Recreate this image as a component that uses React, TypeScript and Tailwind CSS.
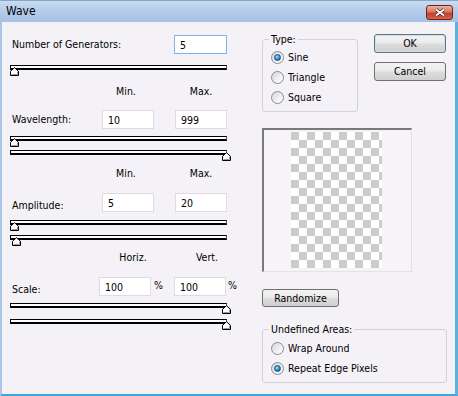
type TSlider = {
  className: string;
  thumb: string;
};

const Slider = ({ className, thumb }: TSlider) => {
  return (
    <div
      className={`relative h-[5px] w-[217px] border-t border-l border-r border-b-2 border-black border-r-[#555] bg-white ${className}`}
    >
      <svg
        width="9"
        height="9"
        viewBox="0 0 9 9"
        className={`absolute top-[1px] ${thumb}`}
      >
        <path d="M0.5 8.5V4.3L4.5 0.7L8.5 4.3V8.5Z" fill="#fff" stroke="#000" />
        <path d="M7.5 4.6V7.5H1.5" fill="none" stroke="#9a9a9a" />
      </svg>
    </div>
  );
};

type TRadio = {
  label: string;
  checked?: boolean;
};

const Radio = ({ label, checked }: TRadio) => {
  return (
    <div className="flex h-[20px] items-center pl-[8px]">
      <div className="flex h-[13px] w-[13px] items-center justify-center rounded-full border border-[#8a8c8e] bg-[linear-gradient(135deg,#d4d4d4,#f6f6f6_70%,#fff)]">
        {checked && (
          <div className="h-[7px] w-[7px] rounded-full border border-[#1a4f86] bg-[radial-gradient(circle_at_40%_35%,#a6e4fb,#2a86cc_55%,#0d4480)]" />
        )}
      </div>
      <span className="ml-[4px]">{label}</span>
    </div>
  );
};

const btn =
  "flex items-center justify-center rounded-[3px] border border-[#707070] bg-[linear-gradient(#f3f3f3,#ebebeb_48%,#dddddd_52%,#cfcfcf)]";

const input =
  "h-[19px] border bg-white pl-[5px] text-black outline-none";

export default function App() {
  return (
    <div className="flex h-[396px] w-[458px] flex-col bg-[#a9c4e5] font-['DejaVu_Sans_Condensed','Liberation_Sans',sans-serif] text-[10.5px] leading-[13px] text-black">
      <div className="flex h-[22px] shrink-0 items-center justify-between border-t border-[#8aa6c8] bg-[linear-gradient(#c9dcf1,#b3cbe9_50%,#a6c1e4)] pl-[6px] pr-[5px]">
        <span className="text-[12px]">Wave</span>
        <div className="mt-[1px] flex h-[15px] w-[27px] items-center justify-center rounded-[3px] border border-[#6e2619] bg-[linear-gradient(#eab1a3,#d87a63_45%,#c2412a_55%,#d2664c)]">
          <svg width="12" height="9" viewBox="0 0 12 9">
            <path d="M2 1.5L10 7.5M10 1.5L2 7.5" stroke="#5c1c12" strokeWidth="3.4" />
            <path d="M2 1.5L10 7.5M10 1.5L2 7.5" stroke="#fff" strokeWidth="1.8" />
          </svg>
        </div>
      </div>
      <div className="flex flex-1 border-b-2 border-l-2 border-r-[3px] border-b-[#3aa6dc] border-l-[#a9c6e8] border-r-[#5ab1e2] bg-[#f4f2f7] pl-[8px]">
        <div className="flex w-[230px] flex-col">
          <div className="mt-[13px] flex h-[19px] items-center">
            <span className="w-[164px] pl-[2px]">Number of Generators:</span>
            <input className={`${input} w-[53px] border-[#7eb4ea]`} defaultValue="5" />
          </div>
          <Slider className="mt-[11px]" thumb="left-[-1px]" />

          <div className="mt-[15px] flex h-[13px]">
            <span className="ml-[90px] w-[52px] text-center">Min.</span>
            <span className="ml-[23px] w-[52px] text-center">Max.</span>
          </div>
          <div className="mt-[12px] flex h-[19px] items-center">
            <span className="w-[92px] pl-[2px]">Wavelength:</span>
            <input className={`${input} w-[52px] border-[#dedbe2]`} defaultValue="10" />
            <input className={`${input} ml-[21px] w-[52px] border-[#dedbe2]`} defaultValue="999" />
          </div>
          <Slider className="mt-[7px]" thumb="left-[-1px]" />
          <Slider className="mt-[9px]" thumb="right-[-5px]" />

          <div className="mt-[12px] flex h-[13px]">
            <span className="ml-[90px] w-[52px] text-center">Min.</span>
            <span className="ml-[23px] w-[52px] text-center">Max.</span>
          </div>
          <div className="mt-[13px] flex h-[19px] items-center">
            <span className="w-[92px] pl-[2px] pt-[5px]">Amplitude:</span>
            <input className={`${input} w-[52px] border-[#dedbe2]`} defaultValue="5" />
            <input className={`${input} ml-[21px] w-[52px] border-[#dedbe2]`} defaultValue="20" />
          </div>
          <Slider className="mt-[8px]" thumb="left-[-1px]" />
          <Slider className="mt-[10px]" thumb="left-[1px]" />

          <div className="mt-[11px] flex h-[13px]">
            <span className="ml-[97px] w-[52px] text-center">Horiz.</span>
            <span className="ml-[22px] w-[52px] text-center">Vert.</span>
          </div>
          <div className="mt-[13px] flex h-[19px] items-center">
            <span className="w-[89px] pl-[2px] pt-[6px]">Scale:</span>
            <input className={`${input} w-[52px] border-[#dedbe2]`} defaultValue="100" />
            <span className="w-[23px] pb-[2px] pl-[3px]">%</span>
            <input className={`${input} w-[52px] border-[#dedbe2]`} defaultValue="100" />
            <span className="pb-[2px] pl-[2px]">%</span>
          </div>
          <Slider className="mt-[7px]" thumb="right-[-5px]" />
          <Slider className="mt-[11px]" thumb="right-[-5px]" />
        </div>

        <div className="ml-[22px] flex flex-col">
          <div className="flex items-start">
            <fieldset className="mt-[11px] w-[96px] rounded-[3px] border border-[#d3d2d8] pb-[4px]">
              <legend className="ml-[6px] px-[2px]">Type:</legend>
              <div className="mt-[1px]">
                <Radio label="Sine" checked />
                <Radio label="Triangle" />
                <Radio label="Square" />
              </div>
            </fieldset>
            <div className="ml-[16px] mt-[12px] flex flex-col gap-[9px]">
              <div className={`${btn} h-[19px] w-[72px] border-[#3c7fb1] shadow-[inset_0_0_0_1px_#bfe4f7]`}>OK</div>
              <div className={`${btn} h-[19px] w-[72px]`}>Cancel</div>
            </div>
          </div>

          <div className="mt-[16px] flex h-[144px] w-[150px] border-b border-l-2 border-r border-t-2 border-b-[#e3e1e6] border-l-[#7a7a7a] border-r-[#e3e1e6] border-t-[#7a7a7a] bg-[#f6f4f8] pl-[27px] pt-[2px]">
            <div className="h-[136px] w-[91px] bg-[conic-gradient(#fff_25%,#cccccc_0_50%,#fff_0_75%,#cccccc_0)] bg-[length:16px_16px]" />
          </div>

          <div className={`${btn} mt-[17px] h-[18px] w-[77px]`}>Randomize</div>

          <fieldset className="mt-[16px] w-[185px] rounded-[3px] border border-[#d3d2d8] pb-[4px]">
            <legend className="ml-[6px] px-[2px]">Undefined Areas:</legend>
            <div className="mt-[2px]">
              <Radio label="Wrap Around" />
              <Radio label="Repeat Edge Pixels" checked />
            </div>
          </fieldset>
        </div>
      </div>
    </div>
  );
}
